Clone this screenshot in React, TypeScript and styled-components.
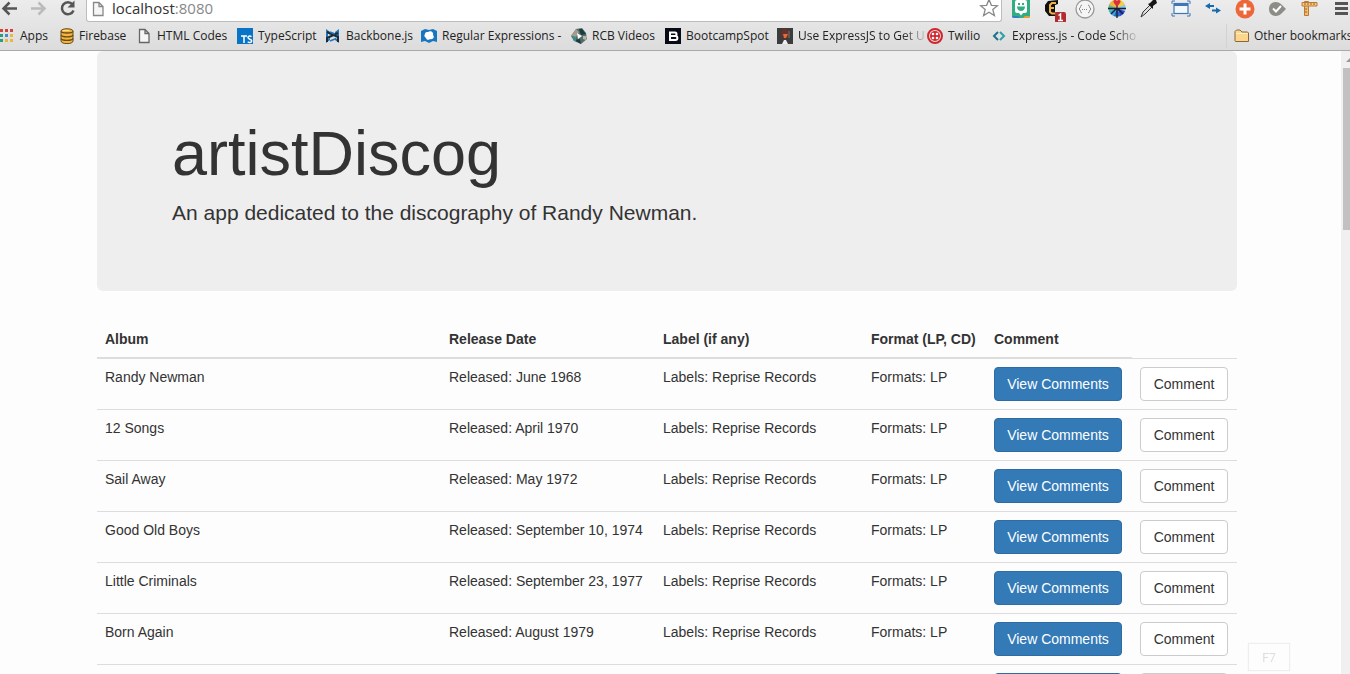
import React from "react";
import styled, { createGlobalStyle, css } from "styled-components";

const GlobalStyle = createGlobalStyle`
  * { box-sizing: border-box; }
  body {
    margin: 0;
    background: #fdfdfd;
    color: #333;
    font: 14px/20px "Liberation Sans", Arial, sans-serif;
  }
`;

const Window = styled.div`
  display: flex;
  flex-direction: column;
  height: 100vh;
  overflow: hidden;
`;

/* Browser chrome */

const Chrome = styled.header`
  flex: none;
  background: linear-gradient(#ececec, #dcdcdc);
  border-bottom: 1px solid #a9a9a9;
  font-family: "Open Sans", "Noto Sans", sans-serif;
`;

const Toolbar = styled.div`
  display: flex;
  height: 22px;
`;

const NavButtons = styled.nav`
  display: flex;
  flex: none;
  width: 86px;
`;

const IconButton = styled.button<{ $width: number }>`
  display: flex;
  flex: none;
  width: ${(p) => p.$width}px;
  height: 20px;
  padding: 0;
  border: 0;
  background: none;
  justify-content: flex-start;
  align-items: flex-start;
`;

const AddressBar = styled.div`
  display: flex;
  flex: 1;
  min-width: 0;
  height: 22px;
  padding: 0 2px 3px 5px;
  gap: 5px;
  align-items: center;
  background: #fff;
  border: 1px solid #bcbcbc;
  border-top: 0;
  border-radius: 0 0 3px 3px;
`;

const Address = styled.div`
  flex: 1;
  height: 18px;
  font-size: 15px;
  line-height: 16px;
  color: #888;
`;

const Host = styled.span`
  color: #333;
`;

const Extensions = styled.div`
  display: flex;
  flex: none;
  width: 348px;
  padding-left: 3px;
  overflow: hidden;
`;

const ExtensionButton = styled.button`
  display: flex;
  flex: none;
  justify-content: center;
  width: 32px;
  height: 22px;
  padding: 0;
  border: 0;
  background: none;
`;

const BookmarkBar = styled.nav`
  display: grid;
  grid-template-columns: 60px 78px 99px 88px 96px 150px 94px 112px 150px 65px 136px 1fr 124px;
  align-items: center;
  height: 28px;
`;

const Bookmark = styled.a<{ $fade?: boolean; $last?: boolean }>`
  display: flex;
  min-width: 0;
  gap: 4px;
  align-items: center;
  color: #222;
  font-size: 12px;
  line-height: 20px;
  text-decoration: none;
  white-space: nowrap;
  svg { flex: none; }
  ${(p) =>
    p.$last &&
    css`
      grid-column: 13;
      height: 24px;
      padding-left: 7px;
      border-left: 1px solid #cfd4d2;
    `}
  ${(p) =>
    p.$fade &&
    css`
      span {
        -webkit-mask-image: linear-gradient(90deg, #000 82%, rgba(0, 0, 0, 0.15));
        mask-image: linear-gradient(90deg, #000 82%, rgba(0, 0, 0, 0.15));
      }
    `}
`;

/* Page */

const Viewport = styled.div`
  display: flex;
  flex: 1;
  min-height: 0;
`;

const Page = styled.main`
  flex: 1;
  min-width: 0;
  padding-right: 7px;
  overflow: hidden;
`;

const Container = styled.div`
  max-width: 1140px;
  margin: 0 auto;
`;

const Jumbotron = styled.section`
  padding: 68px 75px 63px;
  margin-bottom: 30px;
  background: #eee;
  border-radius: 6px;
`;

const Title = styled.h1`
  margin: 0 0 10px;
  font-size: 63px;
  font-weight: 400;
  line-height: 69px;
`;

const Lead = styled.p`
  margin: 0;
  font-size: 21px;
  line-height: 30px;
`;

const Table = styled.table`
  width: 100%;
  table-layout: fixed;
  border-collapse: collapse;
`;

const Column = styled.col<{ $width?: number }>`
  width: ${(p) => (p.$width ? `${p.$width}px` : "auto")};
`;

const HeadCell = styled.th`
  padding: 8px;
  border-bottom: 2px solid #ddd;
  text-align: left;
  white-space: nowrap;
`;

const Cell = styled.td`
  padding: 8px;
  border-top: 1px solid #ddd;
  vertical-align: top;
  white-space: nowrap;
`;

const Button = styled.button<{ $primary?: boolean }>`
  display: block;
  width: ${(p) => (p.$primary ? 128 : 88)}px;
  height: 34px;
  padding: 0;
  font: inherit;
  color: ${(p) => (p.$primary ? "#fff" : "#333")};
  background: ${(p) => (p.$primary ? "#337ab7" : "#fff")};
  border: 1px solid ${(p) => (p.$primary ? "#2e6da4" : "#ccc")};
  border-radius: 4px;
`;

const ScrollTrack = styled.div`
  flex: none;
  width: 9px;
  padding: 6px 0 0 2px;
  background: #f0f0f0;
`;

const ScrollArrow = styled.svg`
  display: block;
  margin: 0 0 6px 3px;
`;

const ScrollThumb = styled.div`
  height: 162px;
  background: #c1c1c1;
`;

const KeyHint = styled.div`
  position: fixed;
  right: 60px;
  bottom: 3px;
  width: 42px;
  height: 28px;
  border: 1px solid #eee;
  box-shadow: 0 0 1px #eee;
  color: #ddd;
  font: 12px/28px Roboto, sans-serif;
  text-align: center;
`;

/* Icons */

const Icon = ({ w = 16, h = 16, children }: { w?: number; h?: number; children: React.ReactNode }) => (
  <svg width={w} height={h} viewBox={`0 0 ${w} ${h}`} fill="none" aria-hidden="true">
    {children}
  </svg>
);

const ArrowIcon = ({ color, flip }: { color: string; flip?: boolean }) => (
  <Icon w={18} h={18}>
    <path
      d="M17 8.500H4M9.500 2.500L3.500 8.500L9.500 14.500"
      stroke={color}
      strokeWidth="2.500"
      transform={flip ? "matrix(-1 0 0 1 19 0)" : undefined}
    />
  </Icon>
);

const ReloadIcon = () => (
  <Icon w={18} h={18}>
    <path d="M13.500 4.300A6 6 0 1 0 14.500 10.500" stroke="#555" strokeWidth="2.500" />
    <path d="M15.500 0.500V7.500H8.500Z" fill="#555" />
  </Icon>
);

const PageIcon = ({ color = "#666" }) => (
  <Icon w={15} h={16}>
    <path d="M1.500 1.500H7L11 5.500V14.500H1.500ZM7 1.500V5.500H11" fill="#f6f6f6" stroke={color} strokeWidth="1.300" />
  </Icon>
);

const StarIcon = () => (
  <Icon w={20} h={19}>
    <path d="M10 0.500L12.400 6.300L18.500 6.700L13.800 10.600L15.400 16.500L10 13.200L4.600 16.500L6.200 10.600L1.500 6.700L7.600 6.300Z" stroke="#888" strokeWidth="1.300" />
  </Icon>
);

const AppsIcon = () => (
  <Icon>
    {[
      ["#d0433c", "#d0433c", "#d0433c"],
      ["#2e9c7c", "#3d8fd1", "#e9b73e"],
      ["#2e9c7c", "#e9b73e", "#e9b73e"],
    ].map((row, y) =>
      row.map((fill, x) => <rect key={`${x}${y}`} x={x * 5} y={1 + y * 5} width="3" height="3" fill={fill} />)
    )}
  </Icon>
);

const FirebaseIcon = () => (
  <Icon w={15}>
    <path d="M1 3C1 0 13 0 13 3V13C13 16.500 1 16.500 1 13Z" fill="#f5b63b" stroke="#654a1a" />
    <path d="M1 3.500C2 5.500 12 5.500 13 3.500M1 7C2 9.500 12 9.500 13 7M1 10.500C2 13 12 13 13 10.500" stroke="#654a1a" strokeWidth="1.300" />
    <path d="M3 2.500H9" stroke="#ffe39b" />
  </Icon>
);

const TypeScriptIcon = () => (
  <Icon w={17}>
    <path d="M0 0H16V16H0Z" fill="#0974c6" />
    <path d="M4 8H10M7 8V15M14.500 8.700C12.500 7.500 11 8.300 11 9.500C11 11.500 14.700 11 14.700 13C14.700 14.800 12 14.800 10.700 13.700" stroke="#fff" strokeWidth="1.500" />
  </Icon>
);

const BackboneIcon = () => (
  <Icon w={17}>
    <path d="M1 1L5 4V12L1 15ZM14 1L10 4V12L14 15Z" fill="#2275bd" />
    <path d="M3 5.500L7.500 8L3 11ZM12 5.500L8 8L12 11Z" fill="#e0e0e0" />
    <path d="M2 4L13 9V14M13 5L2 10V14" stroke="#1b2b3a" strokeWidth="2" />
    <path d="M5 4L10 6M5 13L10 11" stroke="#2275bd" strokeWidth="1.500" />
  </Icon>
);

const RegexIcon = () => (
  <Icon w={17}>
    <path d="M0 3L4 1L8 2L12 1L16 3V14L12 13L8 15L4 13L0 14Z" fill="#1875bf" />
    <path d="M4 6C4 4 6 4 7 4C10 2 13 5 12 7C14 9 12 12 9 11C7 13 5 11 5 10C3 9 3 7 4 6Z" fill="#fff" />
  </Icon>
);

const VideosIcon = () => (
  <Icon w={17}>
    <path d="M5 1L11 0L15 5L16 11L10 16L3 13L0 8Z" fill="#566c68" />
    <path d="M5 1L8 4L5 9L0 8Z" fill="#a59c8d" />
    <path d="M8 1H11L15 6L10 7ZM3 12L9 11L10 16Z" fill="#163f43" />
    <path d="M1 8L5 9V13L3 13Z" fill="#3c8c88" />
    <path d="M6 5L11 8L7 11Z" fill="#fff" />
    <path d="M12 8H16L15 12L12 11Z" fill="#b8b5aa" />
  </Icon>
);

const BootcampIcon = () => (
  <Icon w={17}>
    <path d="M0 0H16V16H0Z" fill="#090b14" />
    <path d="M5 4.500H10C12 4.500 12 8 10 8H5ZM5 8H10.500C13 8 13 12 10.500 12H5Z" stroke="#fff" strokeWidth="2" />
  </Icon>
);

const ExpressIcon = () => (
  <Icon w={17}>
    <path d="M0 0H16V16H0Z" fill="#3d3c3d" />
    <path d="M5 1L4 7L7 11H9L12 7L10 1Z" fill="#653128" />
    <path d="M6 6H11L9 10H7Z" fill="#e36b3c" />
    <path d="M7 12H9L11 16H5Z" fill="#eee" />
    <path d="M12 3V10" stroke="#777" />
  </Icon>
);

const TwilioIcon = () => (
  <Icon w={17}>
    <circle cx="8" cy="8" r="7" fill="#f3dcdc" stroke="#cf272d" strokeWidth="2" />
    <circle cx="8" cy="8" r="5" fill="#cf272d" />
    {[6, 10].map((x) => [6, 10].map((y) => <circle key={`${x}${y}`} cx={x} cy={y} r="1.300" fill="#fff" />))}
  </Icon>
);

const CodeIcon = () => (
  <Icon>
    <path d="M6 4L2 8L6 12" stroke="#21708a" strokeWidth="2" />
    <path d="M8 4L12 8L8 12" stroke="#2ba0a7" strokeWidth="2" />
  </Icon>
);

const FolderIcon = () => (
  <Icon>
    <path d="M1 13V3.500L2.500 2H6L8 4H13.500L14.500 5V13.500H1.500Z" fill="#fbd68c" stroke="#8a663a" />
    <path d="M2 5.500H14" stroke="#fff0c5" />
  </Icon>
);

const extensions: { name: string; art: React.ReactNode }[] = [
  {
    name: "Bitmoji",
    art: (
      <>
        <rect x="2" y="-2" width="18" height="20" rx="2" fill="#32ac83" />
        <path d="M2 16H8L10 18H4Q2 18 2 16Z" fill="#337fc4" />
        <path d="M13 18L15 16H20Q20 18 18 18Z" fill="#f19a31" />
        <path d="M7 0H15Q17 0 17 2V11Q17 13 15 13H13L11 15.500L9 13H7Q5 13 5 11V2Q5 0 7 0Z" fill="#fff" />
        <path d="M7 6.500H15C15 12.500 7 12.500 7 6.500Z" fill="#32ac83" />
        <path d="M8 3H10V5H8ZM12 3H14V5H12Z" fill="#32ac83" />
      </>
    ),
  },
  {
    name: "Emmet",
    art: (
      <>
        <path d="M6 1L16 0V4L13 5V12L16 13V16H7L3 11V5Z" fill="#111" />
        <path d="M14 3H10L8 5V12L10 13.500H14M8 8H12" stroke="#efb244" strokeWidth="2" />
        <rect x="13" y="12" width="11" height="11" rx="2" fill="#b32b2e" />
        <path d="M16.500 15.500L18.500 14V20.500M16 20.500H21" stroke="#fff" strokeWidth="1.500" />
      </>
    ),
  },
  {
    name: "JSON",
    art: (
      <>
        <circle cx="11" cy="9" r="9" fill="#f5f5f5" stroke="#999" strokeWidth="1.300" />
        <path d="M8 5C6 5 7 8 5 9C7 10 6 13 8 13M14 5C16 5 15 8 17 9C15 10 16 13 14 13" stroke="#888" />
        <path d="M8 9.500H14" stroke="#888" strokeDasharray="1 1" />
      </>
    ),
  },
  {
    name: "Colour wheel",
    art: (
      <>
        {["#e9d9cc", "#f2cf3e", "#8ac5ea", "#2a4bd0", "#2469c4", "#38a6dd", "#57b896", "#f0b23c"].map((fill, i) => (
          <path key={fill} d="M11 8L7.500 0Q11 -1.500 14.500 0Z" fill={fill} transform={`rotate(${i * 45} 11 8)`} />
        ))}
        <path d="M2 8.500H20M11 5V18M5 14L11 8L17 14" stroke="#1c1c33" strokeWidth="1.300" />
        <path d="M11 7L8 3C6 0 10 -1 11 1C12 -1 16 0 14 3Z" fill="#dc2f38" />
      </>
    ),
  },
  {
    name: "Eyedropper",
    art: (
      <>
        <path d="M3 17L5 12L12 5L14 7L7 14Z" fill="#ddd" stroke="#333" />
        <path d="M10 4L12 3L15 0L18 0L19 3L15 6L15 9Z" fill="#161616" />
      </>
    ),
  },
  {
    name: "Window size",
    art: (
      <>
        <path d="M2 4V1H5M17 1H20V4M2 13V16H5M17 16H20V13" stroke="#3f77b5" />
        <rect x="4" y="3.500" width="14" height="10" fill="#f2f7fb" stroke="#3f77b5" strokeWidth="1.200" />
        <path d="M4 5H18" stroke="#3f77b5" strokeWidth="2" />
      </>
    ),
  },
  {
    name: "Swap",
    art: (
      <>
        <path d="M7 6H12M15 10.500H10" stroke="#146bae" strokeWidth="2" />
        <path d="M8 3V9L3 6ZM14 7.500V13.500L19 10.500Z" fill="#146bae" />
      </>
    ),
  },
  {
    name: "Add",
    art: (
      <>
        <circle cx="11" cy="9" r="9.500" fill="#ec683b" />
        <path d="M5.500 9H16.500M11 3.500V14.500" stroke="#fff" strokeWidth="3" />
      </>
    ),
  },
  {
    name: "Check",
    art: (
      <>
        <path d="M3 9C3 1 12 0 16 5L20 9L16 13C12 18 3 17 3 9Z" fill="#8c8d87" />
        <path d="M7 8.500L10 11.500L15 6" stroke="#fff" strokeWidth="2" />
      </>
    ),
  },
  {
    name: "Ruler",
    art: (
      <>
        <path d="M6.500 1.500H10.500V15.500H6.500Z" fill="#f2bd67" stroke="#bc7838" />
        <path d="M4 2.500H19V6H4Z" fill="#f6cb7c" stroke="#bc7838" />
        <path d="M7 3V5M10 3V5M13 3V5M16 3V5M7 9H9M7 12H9" stroke="#9b6228" />
      </>
    ),
  },
  { name: "Menu", art: <path d="M5 3.500H18M5 8.500H18M5 13.500H18" stroke="#555" strokeWidth="2.800" /> },
];

const bookmarks: { label: string; icon: React.ReactNode; fade?: boolean; last?: boolean }[] = [
  { label: "Apps", icon: <AppsIcon /> },
  { label: "Firebase", icon: <FirebaseIcon /> },
  { label: "HTML Codes", icon: <PageIcon /> },
  { label: "TypeScript", icon: <TypeScriptIcon /> },
  { label: "Backbone.js", icon: <BackboneIcon /> },
  { label: "Regular Expressions -", icon: <RegexIcon /> },
  { label: "RCB Videos", icon: <VideosIcon /> },
  { label: "BootcampSpot", icon: <BootcampIcon /> },
  { label: "Use ExpressJS to Get U", icon: <ExpressIcon />, fade: true },
  { label: "Twilio", icon: <TwilioIcon /> },
  { label: "Express.js - Code Scho", icon: <CodeIcon />, fade: true },
  { label: "Other bookmarks", icon: <FolderIcon />, last: true },
];

const albums = [
  ["Randy Newman", "June 1968"],
  ["12 Songs", "April 1970"],
  ["Sail Away", "May 1972"],
  ["Good Old Boys", "September 10, 1974"],
  ["Little Criminals", "September 23, 1977"],
  ["Born Again", "August 1979"],
  ["Trouble in Paradise", "January 1983"],
];

export default function App() {
  return (
    <Window>
      <GlobalStyle />
      <Chrome>
        <Toolbar>
          <NavButtons>
            <IconButton $width={29} aria-label="Back"><ArrowIcon color="#555" /></IconButton>
            <IconButton $width={30} aria-label="Forward"><ArrowIcon color="#bbb" flip /></IconButton>
            <IconButton $width={27} aria-label="Reload"><ReloadIcon /></IconButton>
          </NavButtons>
          <AddressBar>
            <PageIcon color="#888" />
            <Address><Host>localhost</Host>:8080</Address>
            <IconButton $width={20} aria-label="Bookmark this page"><StarIcon /></IconButton>
          </AddressBar>
          <Extensions>
            {extensions.map((e) => (
              <ExtensionButton key={e.name} aria-label={e.name}>
                <Icon w={26} h={22}><g transform="translate(2 0)">{e.art}</g></Icon>
              </ExtensionButton>
            ))}
          </Extensions>
        </Toolbar>
        <BookmarkBar>
          {bookmarks.map((b) => (
            <Bookmark key={b.label} href="#" $fade={b.fade} $last={b.last}>
              {b.icon}
              <span>{b.label}</span>
            </Bookmark>
          ))}
        </BookmarkBar>
      </Chrome>
      <Viewport>
        <Page>
          <Container>
            <Jumbotron>
              <Title>artistDiscog</Title>
              <Lead>An app dedicated to the discography of Randy Newman.</Lead>
            </Jumbotron>
            <Table>
              <colgroup>
                <Column />
                <Column $width={214} />
                <Column $width={208} />
                <Column $width={123} />
                <Column $width={146} />
                <Column $width={105} />
              </colgroup>
              <thead>
                <tr>
                  <HeadCell>Album</HeadCell>
                  <HeadCell>Release Date</HeadCell>
                  <HeadCell>Label (if any)</HeadCell>
                  <HeadCell>Format (LP, CD)</HeadCell>
                  <HeadCell>Comment</HeadCell>
                </tr>
              </thead>
              <tbody>
                {albums.map(([album, date]) => (
                  <tr key={album}>
                    <Cell>{album}</Cell>
                    <Cell>Released: {date}</Cell>
                    <Cell>Labels: Reprise Records</Cell>
                    <Cell>Formats: LP</Cell>
                    <Cell><Button $primary>View Comments</Button></Cell>
                    <Cell><Button>Comment</Button></Cell>
                  </tr>
                ))}
              </tbody>
            </Table>
          </Container>
        </Page>
        <ScrollTrack>
          <ScrollArrow width="7" height="5" viewBox="0 0 7 5"><path d="M0 5L5 0L10 5Z" fill="#999" /></ScrollArrow>
          <ScrollThumb />
        </ScrollTrack>
      </Viewport>
      <KeyHint>F7</KeyHint>
    </Window>
  );
}
